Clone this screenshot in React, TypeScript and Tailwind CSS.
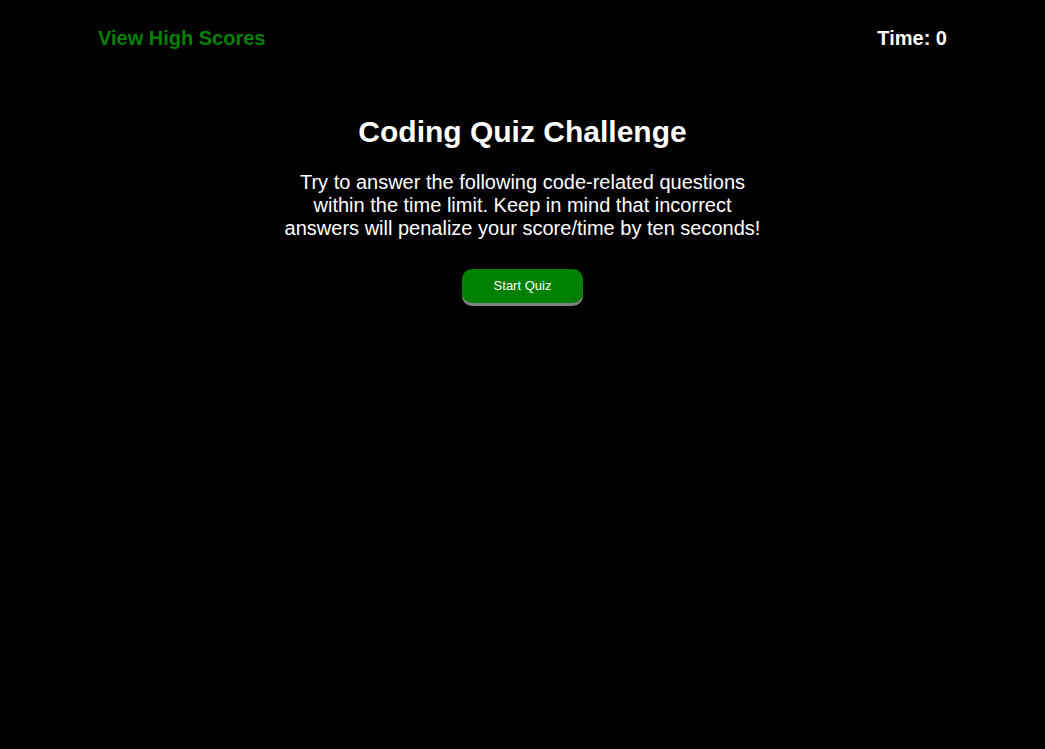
export default function App() {
  return (
    <div
      className="min-h-[749px] w-full bg-black text-white"
      style={{ fontFamily: '"Liberation Sans", Arial, sans-serif' }}
    >
      <header className="flex items-center justify-between px-[98px] pt-[23px]">
        <a className="text-[20px] font-bold text-[#008000]">View High Scores</a>
        <div className="text-[20px] font-bold">Time: 0</div>
      </header>

      <main className="mx-auto mt-[62px] flex w-[480px] flex-col items-center text-center">
        <h1 className="text-[30px] font-bold leading-[34px]">Coding Quiz Challenge</h1>
        <p className="mt-[22px] text-[20px] leading-[23px]">
          Try to answer the following code-related questions within the time limit. Keep in mind
          that incorrect answers will penalize your score/time by ten seconds!
        </p>
        <button className="mt-[29px] h-[34px] w-[121px] rounded-[10px] bg-[#008000] text-[13px] text-white shadow-[0_3px_0_#808080]">
          Start Quiz
        </button>
      </main>
    </div>
  );
}
